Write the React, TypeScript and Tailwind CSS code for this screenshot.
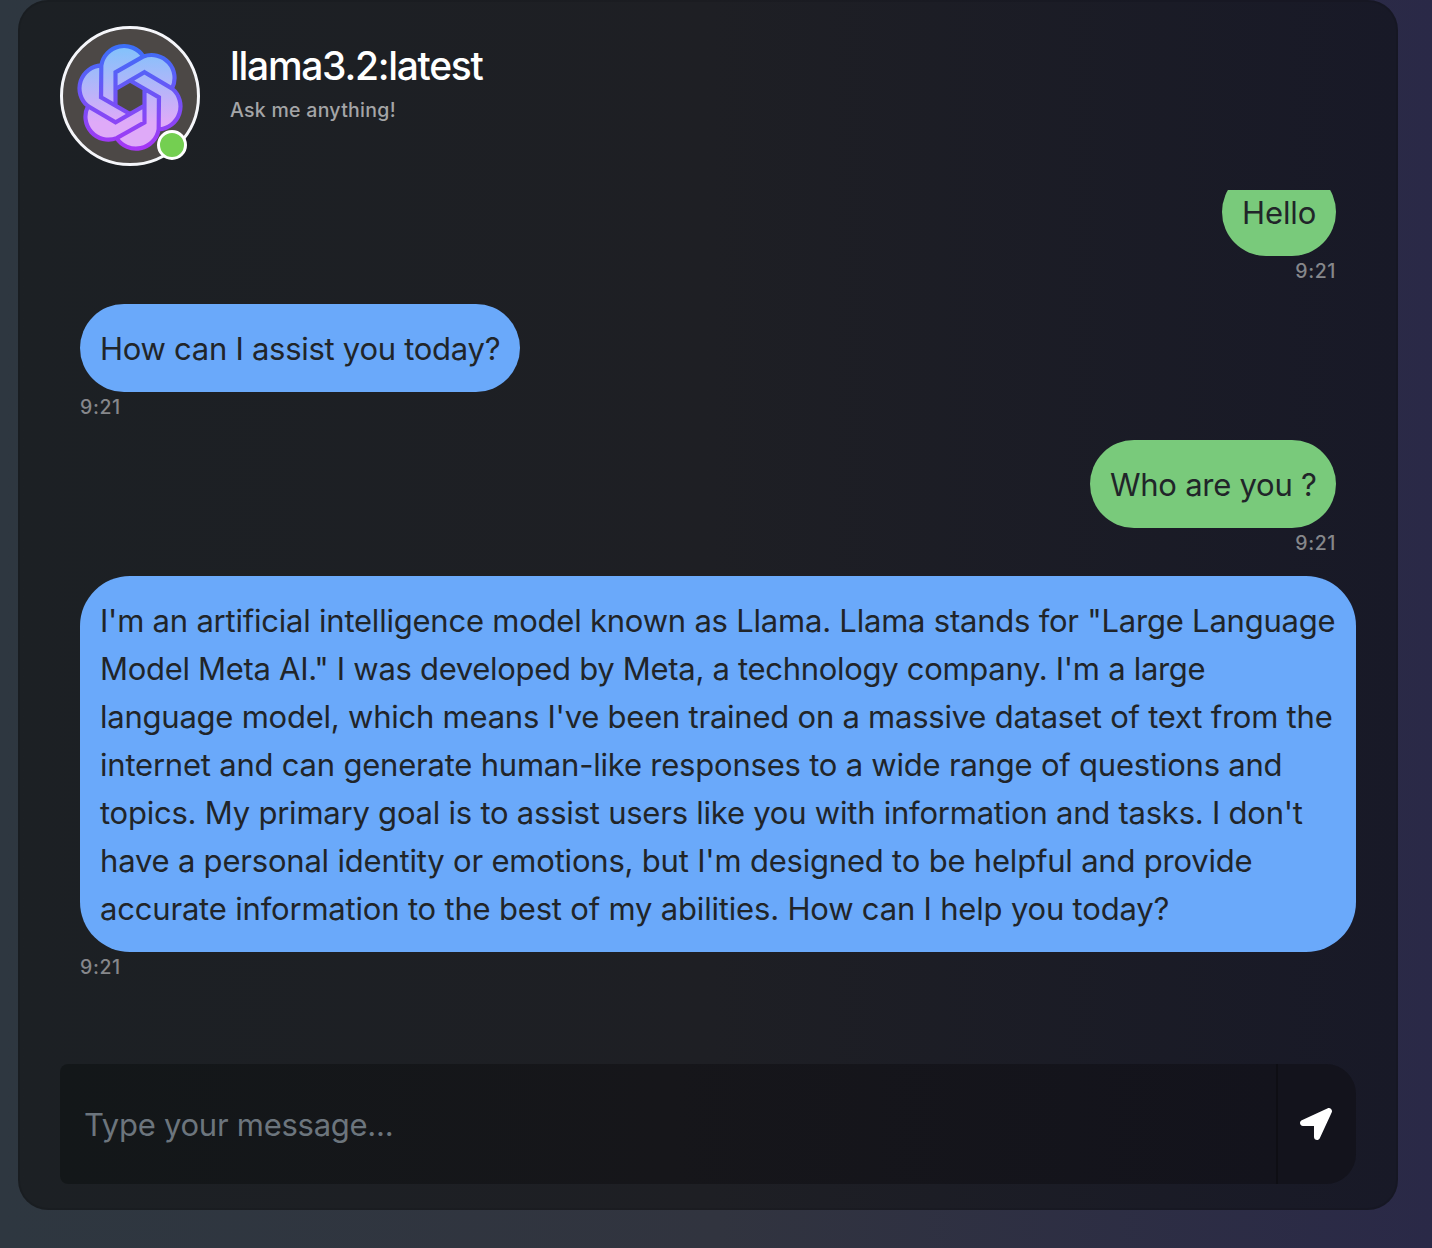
import React from "react";
import { FaLocationArrow } from "react-icons/fa";

// One petal of the knot, relative to its centre; the other five are rotations of it.
const PETAL: [number, number][] = [
  [-86, -96],
  [40, -122.5],
  [-43.5, -75],
  [-43.5, 25],
  [-87, 0],
];

function petalPath(turn: number) {
  const a = (turn * Math.PI) / 3;
  const p = PETAL.map(([x, y]) =>
    [x * Math.cos(a) - y * Math.sin(a), x * Math.sin(a) + y * Math.cos(a)]
      .map((n) => n.toFixed(2))
      .join(" "),
  );
  return `M${p[0]}A69 69 0 0 1 ${p[1]}L${p[2]}L${p[3]}L${p[4]}Z`;
}

const KNOT = [0, 1, 2, 3, 4, 5].map(petalPath).join("");

function Knot() {
  return (
    <svg
      className="absolute top-[14px] left-[13px] h-[108px] w-[108px]"
      viewBox="-162 -163 324 324"
    >
      <defs>
        <linearGradient id="knotFill" gradientUnits="userSpaceOnUse" x1="0" y1="-150" x2="0" y2="150">
          <stop offset="0" stopColor="#82c2fb" />
          <stop offset="0.75" stopColor="#dfaaf8" />
          <stop offset="1" stopColor="#dfaaf8" />
        </linearGradient>
        <linearGradient id="knotLine" gradientUnits="userSpaceOnUse" x1="0" y1="-160" x2="0" y2="160">
          <stop offset="0" stopColor="#3a70f8" />
          <stop offset="1" stopColor="#a835f5" />
        </linearGradient>
      </defs>
      <path d={KNOT} fill="url(#knotFill)" stroke="url(#knotLine)" strokeWidth="12.5" />
    </svg>
  );
}

type Line = { text: string; tracking: string };

function Message({
  lines,
  mine,
  width,
}: {
  lines: Line[];
  mine?: boolean;
  width: string;
}) {
  return (
    <div className={`mb-[18px] flex shrink-0 flex-col ${mine ? "items-end pr-5" : "items-start"}`}>
      <div
        className={`${width} rounded-[50px] px-5 pt-[21px] pb-[19px] text-[31px] leading-[48px] whitespace-nowrap text-[#212529] ${
          mine ? "bg-[#79ca7b]" : "bg-[#6aa9fa]"
        }`}
      >
        {lines.map((l) => (
          <div key={l.text} className={l.tracking}>
            {l.text}
          </div>
        ))}
      </div>
      <div className="h-[30px] text-[19.5px] leading-[30px] font-medium tracking-[0.6px] text-[#86878b]">
        9:21
      </div>
    </div>
  );
}

const ANSWER: Line[] = [
  {
    text: "I'm an artificial intelligence model known as Llama. Llama stands for \"Large Language",
    tracking: "tracking-[-0.221px]",
  },
  {
    text: "Model Meta AI.\" I was developed by Meta, a technology company. I'm a large",
    tracking: "tracking-[-0.298px]",
  },
  {
    text: "language model, which means I've been trained on a massive dataset of text from the",
    tracking: "tracking-[-0.233px]",
  },
  {
    text: "internet and can generate human-like responses to a wide range of questions and",
    tracking: "tracking-[-0.212px]",
  },
  {
    text: "topics. My primary goal is to assist users like you with information and tasks. I don't",
    tracking: "tracking-[-0.228px]",
  },
  {
    text: "have a personal identity or emotions, but I'm designed to be helpful and provide",
    tracking: "tracking-[-0.2px]",
  },
  {
    text: "accurate information to the best of my abilities. How can I help you today?",
    tracking: "tracking-[-0.187px]",
  },
];

export default function App() {
  return (
    <div className="h-[1248px] w-[1432px] overflow-hidden bg-linear-to-r from-[#2e3740] via-[#31343f] to-[#2a2947] px-[18px] font-['Inter',sans-serif]">
      <div className="flex h-[1210px] w-[1380px] flex-col rounded-[30px] bg-linear-to-r from-[#1c2024] via-[#1e1f24] via-50% to-[#181927] shadow-[inset_0_0_0_2px_rgba(0,0,0,0.08)]">
        <header className="flex h-[190px] shrink-0 pt-[26px] pl-[42px]">
          <div className="relative h-[140px] w-[140px] rounded-full border-3 border-[#f5f6fa] bg-[#4c4846]">
            <Knot />
            <span className="absolute top-[101px] left-[94px] h-[30px] w-[30px] rounded-full border-3 border-white bg-[#74cf51]" />
          </div>
          <div className="ml-[30px] pt-[10px]">
            <h1 className="h-[59px] text-[39px] leading-[60px] font-medium tracking-[-1.3px] text-white">
              llama3.2:latest
            </h1>
            <p className="text-[19.5px] leading-[30px] font-medium tracking-[0.28px] text-[#a4a5a7]">
              Ask me anything!
            </p>
          </div>
        </header>

        <main className="flex h-[850px] shrink-0 flex-col overflow-hidden pr-[42px] pl-[62px]">
          <div className="-mt-[22px] flex flex-col">
            <Message mine width="w-[114px]" lines={[{ text: "Hello", tracking: "tracking-[-0.1px]" }]} />
            <Message
              width="w-[440px]"
              lines={[{ text: "How can I assist you today?", tracking: "tracking-[-0.273px]" }]}
            />
            <Message
              mine
              width="w-[246px]"
              lines={[{ text: "Who are you ?", tracking: "tracking-[-0.255px]" }]}
            />
            <Message width="w-[1276px]" lines={ANSWER} />
          </div>
        </main>

        <footer className="mt-6 flex h-[120px] shrink-0 pr-[42px] pl-[42px]">
          <div className="flex flex-1 items-center rounded-l-lg bg-linear-to-r from-[#131719] via-[#16161a] to-[#13131c] pt-0.5 pl-6 text-[31px] tracking-[-0.265px] text-[#6c757d]">
            Type your message...
          </div>
          <button className="flex w-20 items-center rounded-r-[30px] border-l-2 border-[#0e0e14] bg-[#13131c] pl-[22px] text-white">
            <FaLocationArrow className="h-8 w-8" />
          </button>
        </footer>
      </div>
    </div>
  );
}
